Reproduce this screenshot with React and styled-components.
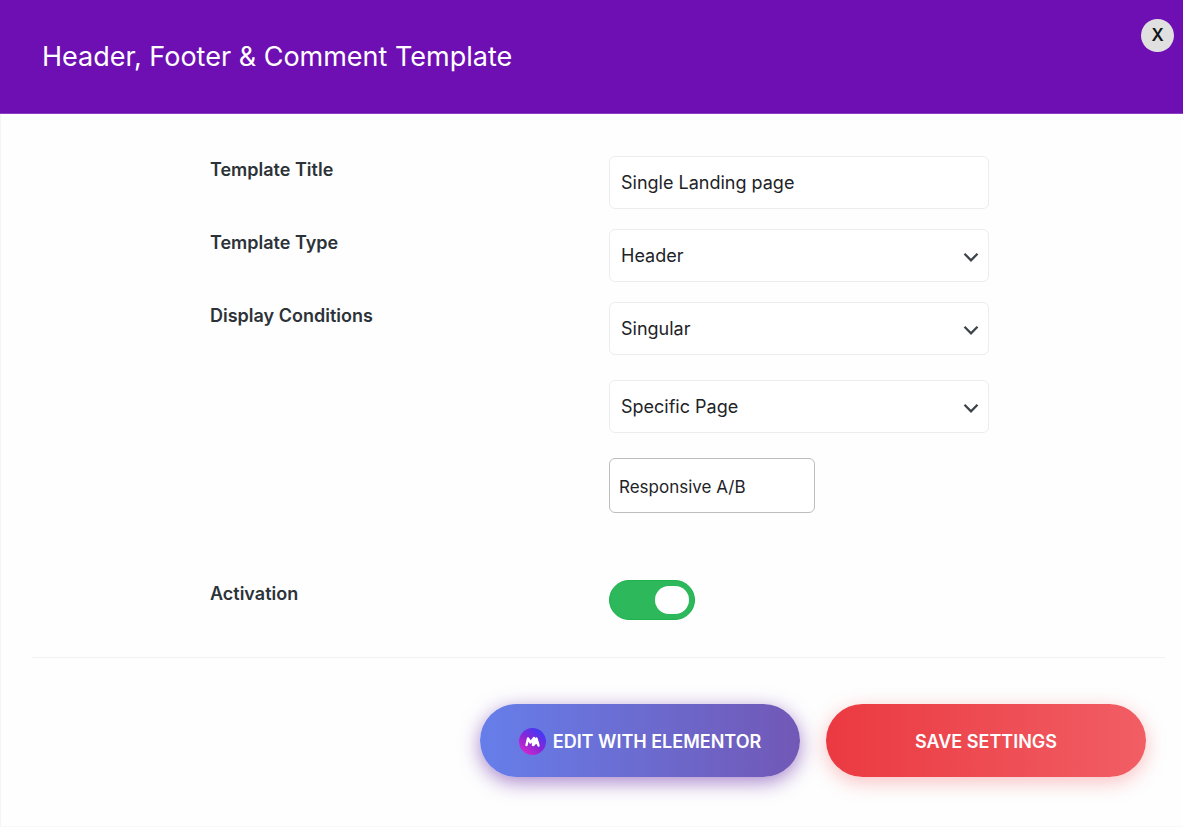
import React, { useState } from "react";
import styled, { createGlobalStyle } from "styled-components";

const GlobalStyle = createGlobalStyle`
  * {
    margin: 0;
    padding: 0;
    box-sizing: border-box;
  }

  body {
    background-color: #fefefe;
    color: #2c3338;
    font-family: Inter, "Liberation Sans", sans-serif;
  }
`;

const Modal = styled.form`
  display: flex;
  flex-direction: column;
  min-height: 100vh;
  border-left: 1px solid #f4f4f4;
  border-bottom: 1px solid #f8f8f8;
`;

const Header = styled.header`
  display: flex;
  align-items: center;
  justify-content: space-between;
  height: 114px;
  margin-left: -1px;
  padding: 0 9px 0 42px;
  background-color: #6e0fb3;
  border-bottom: 1px solid #8a3fc2;
`;

const Title = styled.h1`
  color: #fff;
  font-size: 27px;
  font-weight: 400;
  line-height: 36px;
`;

const CloseButton = styled.button`
  align-self: flex-start;
  width: 33px;
  height: 33px;
  margin-top: 19px;
  border: none;
  border-radius: 50%;
  background-color: #e0e0e0;
  color: #101517;
  font: 600 17px/33px Inter, sans-serif;
  cursor: pointer;
`;

const Fields = styled.div`
  display: flex;
  flex-direction: column;
  gap: 20px;
  padding: 42px 194px 37px 209px;
`;

const Row = styled.div`
  display: grid;
  grid-template-columns: 399px 1fr;
  align-items: start;
  margin-top: ${(props) => (props.$spaced ? "47px" : "0")};
`;

const Label = styled.label`
  font-size: 18px;
  font-weight: 600;
  line-height: 28px;
`;

const Stack = styled.div`
  display: flex;
  flex-direction: column;
  gap: 25px;
`;

const Input = styled.input`
  width: 100%;
  height: 53px;
  padding: 0 11px;
  border: 1px solid #ededed;
  border-radius: 6px;
  background-color: #fff;
  color: #1d2327;
  font: 400 18px Inter, sans-serif;
`;

const PageInput = styled(Input)`
  width: 206px;
  height: 55px;
  padding: 2px 9px 0;
  border-color: #bdbdbd;
  font-size: 17px;
`;

const SelectBox = styled.div`
  position: relative;

  svg {
    position: absolute;
    top: 23px;
    right: 10px;
    pointer-events: none;
  }
`;

const StyledSelect = styled(Input).attrs({ as: "select" })`
  appearance: none;
  padding-right: 36px;
`;

const Toggle = styled.input`
  appearance: none;
  display: flex;
  align-items: center;
  justify-content: flex-end;
  width: 86px;
  height: 40px;
  padding: 0 5px;
  border: 1px solid #1fb251;
  border-radius: 20px;
  background-color: #2db85c;
  cursor: pointer;

  &::before {
    content: "";
    width: 34px;
    height: 28px;
    border-radius: 14px;
    background-color: #fff;
  }

  &:not(:checked) {
    justify-content: flex-start;
    border-color: #c4c4c4;
    background-color: #ccc;
  }
`;

const Footer = styled.footer`
  display: flex;
  justify-content: flex-end;
  gap: 26px;
  margin: 0 18px 0 31px;
  padding: 46px 19px 48px 0;
  border-top: 1px solid #f2f2f2;
`;

const ActionButton = styled.button`
  display: flex;
  align-items: center;
  justify-content: center;
  gap: 7px;
  width: 320px;
  height: 73px;
  padding-top: 1px;
  border: none;
  border-radius: 37px;
  color: #fff;
  font: 600 18px Inter, sans-serif;
  text-transform: uppercase;
  cursor: pointer;
`;

const EditButton = styled(ActionButton)`
  background: linear-gradient(90deg, #667eea 0%, #7158b6 100%);
  box-shadow: 0 5px 20px rgba(94, 30, 160, 0.55);
`;

const SaveButton = styled(ActionButton)`
  background: linear-gradient(90deg, #eb3941 0%, #f15e64 100%);
  box-shadow: 0 5px 20px rgba(242, 97, 103, 0.4);
`;

const Select = ({ options, ...rest }) => (
  <SelectBox>
    <StyledSelect {...rest}>
      {options.map((option) => (
        <option key={option}>{option}</option>
      ))}
    </StyledSelect>
    <svg width="16" height="11" viewBox="0 0 16 11" aria-hidden="true">
      <path
        d="M1.5 1.8 L8 8.3 L14.5 1.8"
        fill="none"
        stroke="#3c434a"
        strokeWidth="2.3"
      />
    </svg>
  </SelectBox>
);

const Logo = () => (
  <svg width="27" height="27" viewBox="0 0 27 27" aria-hidden="true">
    <defs>
      <linearGradient id="logo" x1="0.15" y1="0.9" x2="0.75" y2="0.15">
        <stop offset="0" stopColor="#d127cf" />
        <stop offset="0.5" stopColor="#8b25d6" />
        <stop offset="1" stopColor="#4b36f2" />
      </linearGradient>
    </defs>
    <circle cx="13.5" cy="13.5" r="13.5" fill="url(#logo)" />
    <path
      d="M7.5 17 L9 10.5 L11.5 14.5 L15 10 L14 17 M15 16.5 L17.5 10.5 L19.5 17.5 M15.5 15 L19 15"
      fill="none"
      stroke="#fff"
      strokeWidth="2.4"
      strokeLinecap="round"
      strokeLinejoin="round"
    />
  </svg>
);

const App = () => {
  const [title, setTitle] = useState("Single Landing page");
  const [page, setPage] = useState("Responsive A/B");
  const [active, setActive] = useState(true);

  return (
    <>
      <GlobalStyle />
      <Modal onSubmit={(e) => e.preventDefault()}>
        <Header>
          <Title>Header, Footer &amp; Comment Template</Title>
          <CloseButton type="button" aria-label="Close">
            X
          </CloseButton>
        </Header>

        <Fields>
          <Row>
            <Label htmlFor="title">Template Title</Label>
            <Input
              id="title"
              value={title}
              onChange={(e) => setTitle(e.target.value)}
            />
          </Row>
          <Row>
            <Label htmlFor="type">Template Type</Label>
            <Select id="type" options={["Header", "Footer", "Comment"]} />
          </Row>
          <Row>
            <Label htmlFor="condition">Display Conditions</Label>
            <Stack>
              <Select
                id="condition"
                options={["Singular", "Entire Site", "Archive"]}
              />
              <Select
                aria-label="Singular condition"
                options={["Specific Page", "All Pages", "Front Page"]}
              />
              <PageInput
                aria-label="Page"
                value={page}
                onChange={(e) => setPage(e.target.value)}
              />
            </Stack>
          </Row>
          <Row $spaced>
            <Label htmlFor="activation">Activation</Label>
            <Toggle
              id="activation"
              type="checkbox"
              checked={active}
              onChange={(e) => setActive(e.target.checked)}
            />
          </Row>
        </Fields>

        <Footer>
          <EditButton type="button">
            <Logo />
            Edit with Elementor
          </EditButton>
          <SaveButton type="submit">Save Settings</SaveButton>
        </Footer>
      </Modal>
    </>
  );
};

export default App;
